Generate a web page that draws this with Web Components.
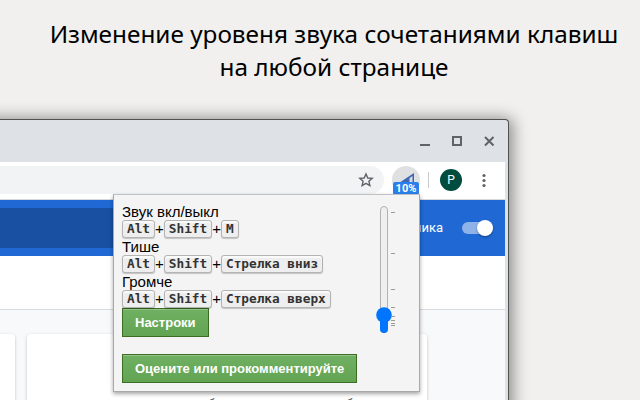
<!DOCTYPE html>
<html lang="ru"><head><meta charset="utf-8"><title>Громкость</title>
<style>html,body{margin:0}body{width:640px;height:400px;overflow:hidden;background:#f1f0ee;font-family:"Liberation Sans",sans-serif}</style>
</head><body><promo-page></promo-page>
<script>
const define=(name,html)=>customElements.define(name,class extends HTMLElement{
  constructor(){super();this.attachShadow({mode:'open'}).innerHTML=html}
});
define('key-cap',`<style>:host{display:inline-block;box-sizing:border-box;font:700 12.75px/1 "DejaVu Sans Mono",monospace;padding:2px 4px;height:18px;color:#333;background:#eee;border:1px solid #b4b4b4;border-radius:3px;box-shadow:0 1px 1px rgba(0,0,0,.2),0 2px 0 rgba(255,255,255,.7) inset;white-space:pre}</style><slot></slot>`);
define('shortcut-row',`<style>:host{display:block;height:35px;font-size:15px;color:#000}
.t{height:17px;line-height:17px}.k{display:flex;height:18px;line-height:18px}</style><div class="t"><slot name="title"></slot></div><div class="k"><slot></slot></div>`);
define('green-button',`<style>:host{display:block;box-sizing:border-box;width:max-content;height:29px;padding:0 12px;border:1px solid #3b6e22;font:bold 13px/27px "Liberation Sans",sans-serif;color:#fff;background:linear-gradient(#6fb062,#63a453);box-shadow:inset 0 1px #95c588}</style><slot></slot>`);
define('volume-slider',`<style>:host{display:block;width:22px;height:132px;margin-top:1px}svg{display:block}</style>
<svg width="22" height="132" viewBox="0 0 22 132"><rect x="4.5" y="2.5" width="7" height="126" rx="3.5" fill="#efefef" stroke="#b2b2b2"/>
<path d="M4 108h8v17a4 4 0 0 1-8 0z" fill="#0075ff"/><circle cx="8" cy="111" r="7.8" fill="#0075ff"/>
<path d="M15 8.5h4M15 49.5h4M15 85.5h4M15 103.5h4M15 112.5h4M15 116.5h4M15 119.5h4M15 121.5h4" stroke="#a09a96"/></svg>`);
define('volume-popup',`<style>:host{display:flex;box-sizing:border-box;width:307px;height:198px;padding:8px;border:1px solid #a9a9a9;border-top-color:#bfc1c4;background:#f4f4f4;box-shadow:0 2px 4px rgba(0,0,0,.35)}
.l{width:254px}green-button+green-button{margin-top:17px}</style>
<div class="l"><shortcut-row><span slot="title">Звук вкл/выкл</span><key-cap>Alt</key-cap>+<key-cap>Shift</key-cap>+<key-cap>M</key-cap></shortcut-row>
<shortcut-row><span slot="title">Тише</span><key-cap>Alt</key-cap>+<key-cap>Shift</key-cap>+<key-cap>Стрелка вниз</key-cap></shortcut-row>
<shortcut-row><span slot="title">Громче</span><key-cap>Alt</key-cap>+<key-cap>Shift</key-cap>+<key-cap>Стрелка вверх</key-cap></shortcut-row>
<green-button>Настроки</green-button><green-button>Оцените или прокомментируйте</green-button></div><volume-slider></volume-slider>`);
define('title-bar',`<style>:host{display:flex;height:42px;background:#dee1e6;justify-content:flex-end}svg{display:block}</style>
<svg width="96" height="42" viewBox="0 0 96 42" fill="none" stroke="#5f6368" stroke-width="2"><path d="M11 25h10M76 17l8.5 8.5M84.500 17L76 25.500"/><rect x="44" y="17" width="8" height="8"/></svg>`);
define('tool-bar',`<style>:host{display:flex;box-sizing:border-box;height:38px;padding-top:4px;background:#fff;border-bottom:1px solid #d5d7da}
.o{box-sizing:border-box;width:384px;height:28px;background:#f1f3f4;border-radius:0 14px 14px 0;display:flex;justify-content:flex-end;padding:6px 10px 0 0}
.e{position:relative;width:28px;height:28px;margin-left:8px;border-radius:50%;background:#dee0e1}
.e svg{display:block}.b{position:absolute;left:1px;top:16px;width:26px;height:13px;border-radius:2px;background:#2a80eb;color:#fff;font:700 11px/13px Roboto,sans-serif;text-align:center}
.s{width:1px;height:16px;margin:6px 0 0 8px;background:#c9cbce}
.p{width:22px;height:22px;margin:3px 0 0 11px;border-radius:50%;background:#004d40;color:#fff;font:12px/22px Roboto,sans-serif;text-align:center}
.m{margin:7px 0 0 18.500px}</style>
<div class="o"><svg width="16" height="16" viewBox="0 0 16 16" fill="none" stroke="#5f6368" stroke-width="1.4"><path d="M8 2l1.800 4 4.400.4-3.300 2.900 1 4.300L8 11.300l-3.900 2.300 1-4.300L1.800 6.400 6.200 6z"/></svg></div>
<div class="e"><svg width="28" height="28" viewBox="0 0 28 28"><path d="M7 17L22 7v10z" fill="#3f66b0"/><path d="M17.500 17v-5l3-2v7z" fill="#d5dbe6"/></svg><span class="b">10%</span></div><div class="s"></div><div class="p">P</div>
<svg class="m" width="6" height="16" viewBox="0 0 6 16" fill="#5f6368"><circle cx="3" cy="2.500" r="1.600"/><circle cx="3" cy="7.500" r="1.600"/><circle cx="3" cy="12.500" r="1.600"/></svg>`);
define('blue-header',`<style>:host{display:flex;box-sizing:border-box;height:56px;background:#2068d3;align-items:center;padding-right:12px}
.q{flex:0 0 376px;height:40px;background:#1950a2}.t{flex:1;text-align:right;padding-right:19px;color:#fff;font:13px/20px Roboto,sans-serif;white-space:nowrap}
.w{width:31px;height:16px;display:flex;align-items:center}.w i{width:31px;height:12px;border-radius:6px;background:#8fb3e9;display:flex;align-items:center;justify-content:flex-end}.w b{flex:none;width:16px;height:16px;border-radius:50%;background:#fff;box-shadow:0 1px 2px rgba(0,0,0,.4)}</style>
<div class="q"></div><div class="t">чика</div><div class="w"><i><b></b></i></div>`);
define('card-list',`<style>:host{display:flex;gap:12px;height:66px;padding-top:24px;background:#f8f9fb;border-top:1px solid #d8dadd;overflow:hidden}
div{box-sizing:border-box;height:90px;background:#fff;border-radius:4px;box-shadow:0 1px 3px rgba(60,64,67,.3)}.a{width:15px;border-radius:0 4px 0 0}.b{width:400px;padding:62px 0 0 181px;font:13px/16px Roboto,sans-serif;color:#5f6368;white-space:pre}.b span{display:inline-block;width:138px}</style>
<div class="a"></div><div class="b"><span>б</span>б</div>`);
define('browser-window',`<style>:host{display:block;box-sizing:border-box;width:539px;height:320px;margin-left:-30px;padding-left:30px;border:1px solid #50524f;border-width:1px 1px 0 0;border-radius:0 4px 0 0;background:#dee1e6;box-shadow:1px 2px 15px 3px rgba(0,0,0,.42);overflow:hidden}
.c{width:505px}.g{height:53px;background:#fff}</style><div class="c"><title-bar></title-bar><tool-bar></tool-bar><blue-header></blue-header><div class="g"></div><card-list></card-list></div>`);
define('promo-page',`<style>:host{display:flex;flex-direction:column;position:relative;width:640px;height:400px;overflow:hidden;background:#f1f0ee}
h1{box-sizing:border-box;height:119px;margin:0;padding:17px 0 0 28px;font:400 24.35px/33px "Noto Sans","Open Sans",sans-serif;color:#000;text-align:center;white-space:nowrap;flex:none}browser-window{flex:none}
volume-popup{position:absolute;left:113px;top:194px}</style><h1>Изменение уровеня звука сочетаниями клавиш<br>на любой странице</h1><browser-window></browser-window><volume-popup></volume-popup>`);
</script></body></html>
